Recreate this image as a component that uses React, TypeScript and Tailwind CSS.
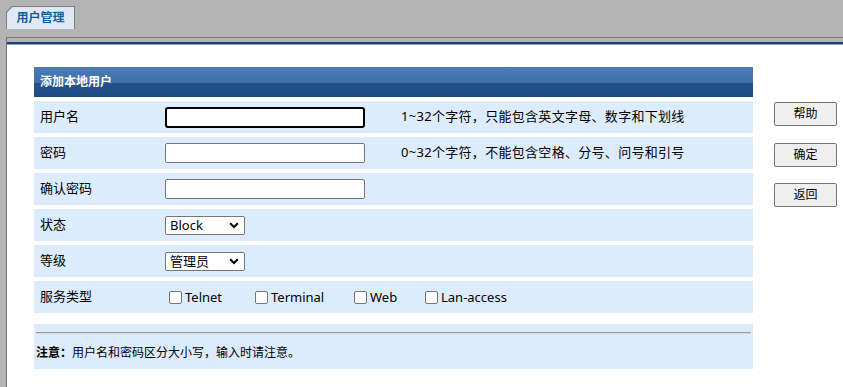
import React from "react";

const font = { fontFamily: '"Noto Sans", "Noto Sans CJK SC", sans-serif' };

function Chevron() {
  return (
    <svg width="10" height="7" viewBox="0 0 10 7" className="shrink-0">
      <path d="M1.2 1.3 L5 5 L8.8 1.3" fill="none" stroke="#000" strokeWidth="2" />
    </svg>
  );
}

function Row({ label, children, hint }: { label: string; children?: React.ReactNode; hint?: string }) {
  return (
    <div className="mt-[4px] flex h-[32px] items-center bg-[#ddecfc] text-[13px] text-black">
      <div className="w-[131px] shrink-0 pl-[6px]">{label}</div>
      <div className="flex w-[236px] shrink-0 items-center">{children}</div>
      {hint && <div className="whitespace-nowrap tracking-[0.3px]">{hint}</div>}
    </div>
  );
}

function Select({ value }: { value: string }) {
  return (
    <div className="flex h-[19px] w-[80px] items-center justify-between rounded-[2px] border border-[#767676] bg-white pl-[4px] pr-[5px] text-[13px] leading-none">
      <span>{value}</span>
      <Chevron />
    </div>
  );
}

function Check({ label, w }: { label: string; w: string }) {
  return (
    <label className={`flex shrink-0 items-center ${w}`}>
      <span className="ml-[4px] mr-[3px] h-[13px] w-[13px] rounded-[2px] border border-[#767676] bg-white" />
      <span className="pt-px">{label}</span>
    </label>
  );
}

function Btn({ text, cls }: { text: string; cls?: string }) {
  return (
    <div
      className={`flex h-[24px] w-[63px] items-center justify-center rounded-[2px] border border-[#767676] bg-[#efefef] text-[12px] text-black ${cls ?? ""}`}
    >
      {text}
    </div>
  );
}

export default function App() {
  return (
    <div className="h-[387px] w-[843px] overflow-hidden bg-[#b4b4b4]" style={font}>
      <div className="h-[37px] pl-[6px] pt-[6px]">
        <div
          className="h-[23px] w-[69px] bg-[#7f7f7f] pl-px pr-px pt-px"
          style={{ clipPath: "polygon(6px 0, 100% 0, 100% 100%, 0 100%, 0 6px)" }}
        >
          <div
            className="flex h-[22px] items-center justify-center bg-[#dfe8f4] text-[12px] font-bold text-[#0b5f9e]"
            style={{ clipPath: "polygon(5.5px 0, 100% 0, 100% 100%, 0 100%, 0 5.5px)" }}
          >
            用户管理
          </div>
        </div>
      </div>
      <div className="ml-[6px] h-[350px] border-l border-t border-[#777777] bg-white">
        <div className="h-[4px] bg-[#b4b4b4]" />
        <div className="h-[2px] bg-[#213f7d]" />
        <div className="h-px bg-[#8f9bb3]" />
        <div className="flex pl-[27px] pt-[22px]">
          <div className="w-[719px] shrink-0">
            <div className="flex h-[30px] items-center bg-[linear-gradient(to_bottom,#4b7cb4_0%,#3f6ea8_52%,#245189_53%,#1f4a84_100%)] pl-[6px] text-[12px] font-bold text-white">
              添加本地用户
            </div>
            <Row label="用户名" hint="1~32个字符，只能包含英文字母、数字和下划线">
              <div className="h-[21px] w-[200px] rounded-[3px] border-2 border-black bg-white" />
            </Row>
            <Row label="密码" hint="0~32个字符，不能包含空格、分号、问号和引号">
              <div className="h-[20px] w-[200px] rounded-[2px] border border-[#767676] bg-white" />
            </Row>
            <Row label="确认密码">
              <div className="h-[20px] w-[200px] rounded-[2px] border border-[#767676] bg-white" />
            </Row>
            <Row label="状态">
              <Select value="Block" />
            </Row>
            <Row label="等级">
              <Select value="管理员" />
            </Row>
            <div className="mt-[4px] flex h-[32px] items-center bg-[#ddecfc] text-[13px] text-black">
              <div className="w-[131px] shrink-0 pl-[6px]">服务类型</div>
              <Check label="Telnet" w="w-[86px]" />
              <Check label="Terminal" w="w-[99px]" />
              <Check label="Web" w="w-[71px]" />
              <Check label="Lan-access" w="w-[120px]" />
            </div>
            <div className="mt-[11px] h-[45px] bg-[#ddecfc] pl-[2px] pr-[2px] pt-[8px] text-[12px] text-black">
              <div className="h-[2px] border-t border-[#9a9a9a] border-b-[#d8d8d8] border-b" />
              <div className="mt-[13px] leading-none">
                <span className="font-bold">注意：</span>用户名和密码区分大小写，输入时请注意。
              </div>
            </div>
          </div>
          <div className="ml-[21px] flex flex-col pt-[35px]">
            <Btn text="帮助" />
            <Btn text="确定" cls="mt-[17px]" />
            <Btn text="返回" cls="mt-[16px]" />
          </div>
        </div>
      </div>
    </div>
  );
}
